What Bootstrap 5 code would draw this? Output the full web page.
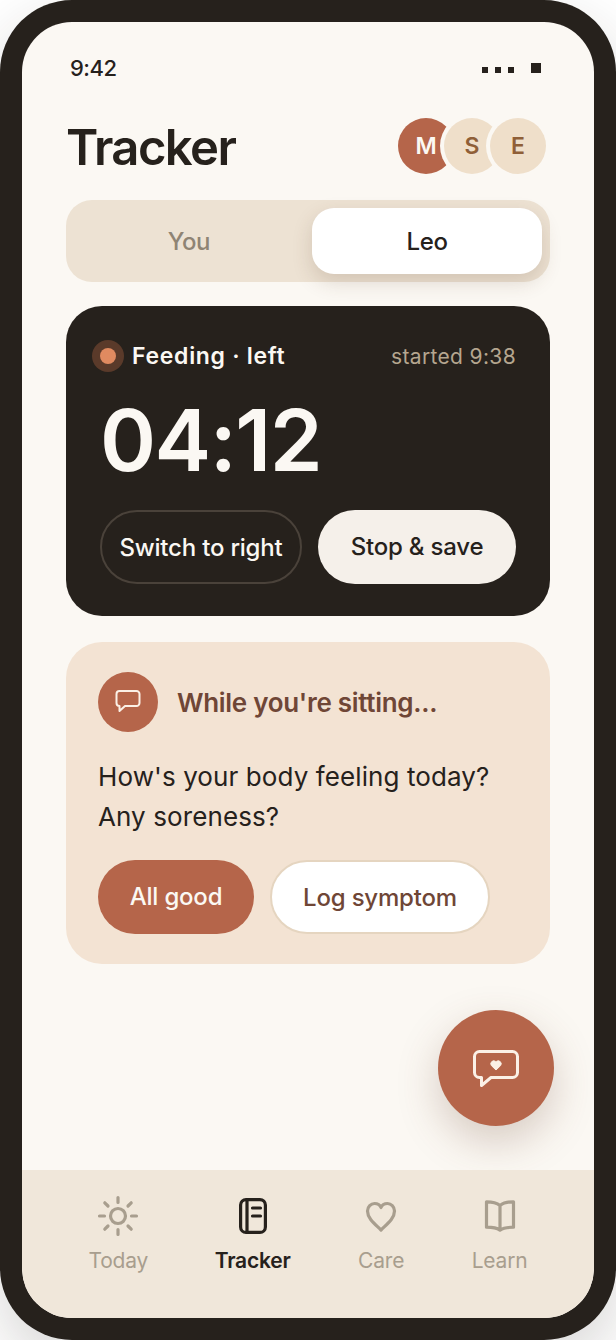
<!DOCTYPE html>
<html lang="en">
<head>
    <meta charset="UTF-8">
    <meta name="viewport" content="width=device-width, initial-scale=1.0">
    <title>Tracker</title>
    <link href="https://cdn.jsdelivr.net/npm/bootstrap@5.3.0/dist/css/bootstrap.min.css" rel="stylesheet">
    <script src="https://cdn.jsdelivr.net/npm/bootstrap@5.3.0/dist/js/bootstrap.bundle.min.js"></script>
    <style>
        html, body { margin: 0; height: 1340px; overflow: hidden; background: #fff; }
        body { font-family: "Inter", "Liberation Sans", sans-serif; color: #26211c; }
        .phone-frame { width: 616px; height: 1340px; padding: 22px; background: #26211c; border-radius: 72px; box-shadow: 0 24px 60px rgba(38, 33, 28, .18); }
        .phone-screen { height: 100%; border-radius: 50px; background: #fbf8f3; overflow: hidden; position: relative; }
        .status-row { height: 91px; padding: 32px 53px 0 48px; }
        .status-time { font-size: 22px; font-weight: 500; line-height: 28px; letter-spacing: -.5px; }
        .sig-dot { width: 6px; height: 6px; background: #26211c; margin-top: 13px; }
        .batt-dot { width: 10px; height: 10px; background: #26211c; margin-left: 10px; margin-top: 9px; }
        .screen-body { padding: 0 44px; }
        .page-head { height: 66px; margin-bottom: 21px; padding-right: 4px; }
        .page-title { font-size: 49px; font-weight: 600; margin: 0; padding-top: 3px; line-height: 66px; letter-spacing: -1.6px; }
        .who { width: 56px; height: 56px; border-radius: 50%; font-size: 23px; font-weight: 600; background: #efdfca; color: #8f5f38; box-shadow: 0 0 0 4px #fbf8f3; margin-left: -10px; }
        .who-m { background: #b5654a; color: #fbf8f3; margin-left: 0; }
        .seg-wrap { height: 82px; padding: 8px; gap: 8px; background: #ede2d3; border-radius: 26px; margin-bottom: 24px; }
        .seg-item { flex: 1 1 0; border-radius: 22px; padding-top: 2px; font-size: 24px; font-weight: 500; color: #8f8474; letter-spacing: -.4px; }
        .seg-on { background: #fff; color: #26211c; box-shadow: 0 8px 20px rgba(90, 60, 40, .18); }
        .timer-box { height: 310px; background: #26211c; border-radius: 36px; padding: 33px 34px 0; margin-bottom: 26px; }
        .live-dot { width: 16px; height: 16px; border-radius: 50%; background: #e08a60; box-shadow: 0 0 0 8px #5a3a2a; margin-right: 16px; }
        .timer-label { font-size: 23px; font-weight: 600; color: #fbf8f3; letter-spacing: .7px; }
        .timer-since { font-size: 21px; color: #b5a68f; letter-spacing: .35px; }
        .timer-num { font-size: 85px; font-weight: 600; line-height: 100px; color: #fbf8f3; margin-top: 17px; margin-bottom: 19px; letter-spacing: -1.5px; }
        .pill-btn { height: 74px; border-radius: 37px; font-size: 24px; font-weight: 500; padding: 0; letter-spacing: -.2px; }
        .pill-ghost { width: 202px; padding-top: 2px; border: 2px solid #4a423a; color: #fbf8f3; background: transparent; }
        .pill-light { width: 198px; border: 0; background: #f5f0ea; color: #26211c; }
        .ask-box { height: 322px; background: #f3e3d3; border-radius: 36px; padding: 30px 32px; }
        .ask-icon { width: 60px; height: 60px; border-radius: 50%; background: #b5654a; margin-right: 19px; }
        .ask-title { font-size: 26px; font-weight: 600; color: #6f4636; letter-spacing: -.3px; }
        .ask-text { font-size: 26px; line-height: 40px; margin: 25px 0 23px; letter-spacing: .1px; }
        .pill-rust { width: 156px; border: 0; background: #b5654a; color: #fbf8f3; }
        .pill-white { width: 220px; padding-top: 2px; border: 2px solid #e5d5c0; background: #fff; color: #6f4636; }
        .chat-fab { position: absolute; left: 416px; top: 988px; width: 116px; height: 116px; border-radius: 50%; background: #b5654a; box-shadow: 0 16px 40px rgba(110, 70, 50, .25); }
        .tab-bar { position: absolute; left: 0; right: 0; bottom: 0; height: 148px; background: #f0e7da; padding-top: 22px; }
        .tab-item { font-size: 21px; font-weight: 400; color: #a89e8e; line-height: 30px; letter-spacing: -.2px; }
        .tab-item svg { display: block; margin-bottom: 6px; }
        .tab-on { color: #26211c; font-weight: 600; }
    </style>
</head>

<body>
    <div class="phone-frame">
        <div class="phone-screen">
            <!-- status bar -->
            <div class="status-row d-flex justify-content-between align-items-start">
                <span class="status-time">9:42</span>
                <div class="d-flex align-items-start" style="gap:7px">
                    <span class="sig-dot"></span><span class="sig-dot"></span><span class="sig-dot"></span><span class="batt-dot"></span>
                </div>
            </div>

            <div class="screen-body">
                <div class="page-head d-flex justify-content-between align-items-center">
                    <h1 class="page-title">Tracker</h1>
                    <div class="d-flex">
                        <span class="who who-m d-flex align-items-center justify-content-center">M</span>
                        <span class="who d-flex align-items-center justify-content-center">S</span>
                        <span class="who d-flex align-items-center justify-content-center">E</span>
                    </div>
                </div>

                <div class="seg-wrap d-flex">
                    <div class="seg-item d-flex align-items-center justify-content-center">You</div>
                    <div class="seg-item seg-on d-flex align-items-center justify-content-center">Leo</div>
                </div>

                <!-- running timer -->
                <div class="timer-box">
                    <div class="d-flex align-items-center">
                        <span class="live-dot"></span>
                        <span class="timer-label">Feeding · left</span>
                        <span class="timer-since ms-auto">started 9:38</span>
                    </div>
                    <div class="timer-num">04:12</div>
                    <div class="d-flex gap-3">
                        <button class="btn pill-btn pill-ghost">Switch to right</button>
                        <button class="btn pill-btn pill-light">Stop &amp; save</button>
                    </div>
                </div>

                <!-- prompt -->
                <div class="ask-box">
                    <div class="d-flex align-items-center">
                        <span class="ask-icon d-flex align-items-center justify-content-center">
                            <svg width="30" height="30" viewBox="0 0 30 30" fill="none" stroke="#fbf0e6" stroke-width="2" stroke-linejoin="round"><path d="M6.500 4h17a3 3 0 0 1 3 3v9a3 3 0 0 1-3 3H12l-5.500 5v-5A3 3 0 0 1 3.500 16V7a3 3 0 0 1 3-3z"/></svg>
                        </span>
                        <span class="ask-title">While you're sitting...</span>
                    </div>
                    <p class="ask-text">How's your body feeling today?<br>Any soreness?</p>
                    <div class="d-flex gap-3">
                        <button class="btn pill-btn pill-rust">All good</button>
                        <button class="btn pill-btn pill-white">Log symptom</button>
                    </div>
                </div>
            </div>

            <div class="chat-fab d-flex align-items-center justify-content-center">
                <svg width="48" height="44" viewBox="0 0 48 44" fill="none" stroke="#fbf0e6" stroke-width="3" stroke-linejoin="round"><path d="M7.500 5.500h33a5 5 0 0 1 5 5v16a5 5 0 0 1-5 5H19l-9.500 8v-8h-2a5 5 0 0 1-5-5v-16a5 5 0 0 1 5-5z"/><path d="M24 24l-4.600-4.400a3 3 0 0 1 4.200-4.200l.4.400.4-.4a3 3 0 0 1 4.200 4.200z" fill="#fbf0e6" stroke-width="1"/></svg>
            </div>

            <!-- bottom nav -->
            <nav class="tab-bar d-flex justify-content-evenly align-items-start">
                <div class="tab-item d-flex flex-column align-items-center">
                    <svg width="48" height="48" viewBox="0 0 48 48" fill="none" stroke="#a89e8e" stroke-width="3.200" stroke-linecap="round"><circle cx="24" cy="24" r="7.500"/><path d="M24 5.500v5M24 37.500v5M5.500 24h5M37.500 24h5M10.800 10.800l3.200 3.200M34 34l3.200 3.200M10.800 37.200l3.200-3.200M34 14l3.200-3.200"/></svg>
                    Today
                </div>
                <div class="tab-item tab-on d-flex flex-column align-items-center">
                    <svg width="48" height="48" viewBox="0 0 48 48" fill="none" stroke="#26211c" stroke-width="3.200" stroke-linecap="round" stroke-linejoin="round"><rect x="11.600" y="7.600" width="24.800" height="32.800" rx="5.500"/><path d="M18 7.600v32.800M23.500 16h8M23.500 24h8"/></svg>
                    Tracker
                </div>
                <div class="tab-item d-flex flex-column align-items-center">
                    <svg width="48" height="48" viewBox="0 0 48 48" fill="none" stroke="#a89e8e" stroke-width="3.200" stroke-linejoin="round"><path d="M24 38C18 32 10.500 26.500 10.500 19 10.500 14.500 14 11.500 17.500 11.500 20.500 11.500 23 13 24 15.500 25 13 27.500 11.500 30.500 11.500 34 11.500 37.500 14.500 37.500 19 37.500 26.500 30 32 24 38z"/></svg>
                    Care
                </div>
                <div class="tab-item d-flex flex-column align-items-center">
                    <svg width="48" height="48" viewBox="0 0 48 48" fill="none" stroke="#a89e8e" stroke-width="3.200" stroke-linejoin="round"><path d="M24 13.500C21 11 16 9.800 10.500 9.800v25.400c5.500 0 10.500.8 13.500 3 3-2.200 8-3 13.500-3V9.800C32 9.800 27 11 24 13.500zM24 13.500v24.700"/></svg>
                    Learn
                </div>
            </nav>
        </div>
    </div>
</body>
</html>
